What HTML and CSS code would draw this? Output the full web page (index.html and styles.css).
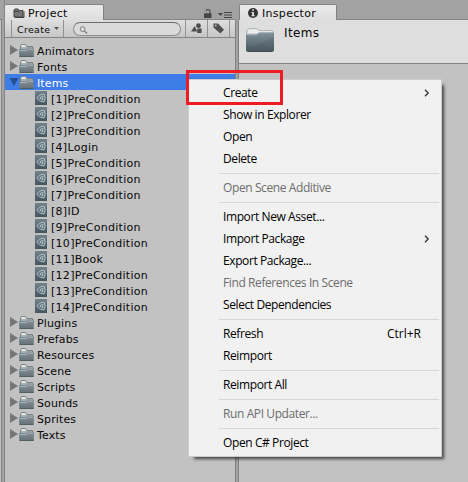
FILE: index.html
```
<!DOCTYPE html>
<html lang="en">
<head>
<meta charset="utf-8">
<title>Project</title>
<link rel="stylesheet" href="styles.css">
</head>
<body>
<svg class="defs" aria-hidden="true">
  <defs>
    <linearGradient id="fg" x1="0" y1="0" x2="0" y2="1"><stop offset="0" stop-color="#87959a"/><stop offset="1" stop-color="#647377"/></linearGradient>
    <linearGradient id="bg" x1="0" y1="0" x2="0" y2="1"><stop offset="0" stop-color="#80919a"/><stop offset="1" stop-color="#4a5a60"/></linearGradient>
    <linearGradient id="sg" x1="0" y1="0" x2="0" y2="1"><stop offset="0" stop-color="#70828b"/><stop offset="1" stop-color="#46565e"/></linearGradient>
    <symbol id="folder" viewBox="0 0 15 15">
      <path d="M1.5 12V3L2.5 1.5H6.5L8 3.5H13.5V12Z" fill="#aab2b4" stroke="#7b8486"/>
      <path d="M2.5 2H6.5V4H2.5Z" fill="#e6eaea"/>
      <path d="M.5 6.5H6.5L8.5 5H14.5V13.5H.5Z" fill="url(#fg)" stroke="#6c797c" stroke-width=".6"/>
      <path d="M1 7.5H7L9 6H14" fill="none" stroke="#b4bfc1" stroke-width=".8"/>
      <path d="M.5 13.5H14.5" stroke="#536063"/>
    </symbol>
    <symbol id="scene" viewBox="0 0 12 14">
      <rect width="12" height="14" fill="url(#sg)"/>
      <path d="M1.8 7L4.5 4.2L9 3L10.2 7L9 11L4.5 9.8Z" fill="none" stroke="#b4c3c8" stroke-width="1"/>
      <path d="M4.6 7L7.8 5V9Z" fill="#5d6f77" stroke="#c4d1d5" stroke-width=".9"/>
    </symbol>
    <symbol id="closed" viewBox="0 0 8 10"><path d="M0 0L8 5L0 10Z" fill="#777"/></symbol>
    <symbol id="chev" viewBox="0 0 6 8"><path d="M1 .8L4.2 4L1 7.2" fill="none" stroke="#333" stroke-width="1.3"/></symbol>
  </defs>
</svg>
<div class="editor">
  <div class="sliver"><div class="sliver-bar"></div></div>
  <section class="project">
    <header class="tabs">
      <div class="tab project-tab">
        <svg class="tab-folder" viewBox="0 0 12 10"><path d="M1 9V2.2L2 1H5L6.2 2.6H10V9Z" fill="#777" stroke="#3e3e3e"/><path d="M1 3.5H6M11 3.5V9.5H2" fill="none" stroke="#444"/></svg>
        <span>Project</span>
      </div>
      <div class="tab-tools">
        <svg class="lock" viewBox="0 0 8 9"><path d="M0 4.3H7.5V9H0Z" fill="#454545"/><path d="M2.3 2.2V1.4Q2.8.5 4 .5Q6 .5 6 2.3V4.5" fill="none" stroke="#454545" stroke-width="1.1"/></svg>
        <svg class="pane-menu" viewBox="0 0 14 6"><path d="M0 1H5L2.5 4Z" fill="#454545"/><path d="M6 .5H14M6 3H14M6 5.5H14" stroke="#454545"/></svg>
      </div>
    </header>
    <div class="toolbar">
      <div class="create">Create<svg viewBox="0 0 5 3"><path d="M0 0H5L2.5 3Z" fill="#555"/></svg></div>
      <div class="search"><svg viewBox="0 0 9 9"><circle cx="3.5" cy="3.5" r="2.7" fill="none" stroke="#777"/><path d="M5.5 5.5L8.5 8.5" stroke="#777" stroke-width="1.4"/></svg></div>
      <div class="tool"><svg class="types" viewBox="0 0 12 11"><path d="M0 8.5L3.7 3L6.2 8.5Z" fill="#4c4c4c"/><circle cx="7.5" cy="2.7" r="2.4" fill="#4c4c4c"/><path d="M6.2 5.5H10.6V10H6.2Z" fill="#4c4c4c"/></svg></div>
      <div class="tool"><svg class="tag" viewBox="0 0 12 11"><path fill-rule="evenodd" d="M.5.5H5L11 6.8L7.3 10.5L.5 4.5ZM2 1.7V3.2H3.5V1.7Z" fill="#505050"/></svg></div>
      <div class="tool last"></div>
    </div>
    <ul class="tree">
      <li><svg class="arrow"><use href="#closed"/></svg><svg class="folder"><use href="#folder"/></svg><span>Animators</span></li>
      <li><svg class="arrow"><use href="#closed"/></svg><svg class="folder"><use href="#folder"/></svg><span>Fonts</span></li>
      <li class="selected"><svg class="arrow" viewBox="0 0 8 10"><path d="M-.5 1H8.5L4 9Z" fill="#254f94"/></svg><svg class="folder"><use href="#folder"/></svg><span>Items</span></li>
      <li class="child"><svg class="scene"><use href="#scene"/></svg><span>[1]PreCondition</span></li>
      <li class="child"><svg class="scene"><use href="#scene"/></svg><span>[2]PreCondition</span></li>
      <li class="child"><svg class="scene"><use href="#scene"/></svg><span>[3]PreCondition</span></li>
      <li class="child"><svg class="scene"><use href="#scene"/></svg><span>[4]Login</span></li>
      <li class="child"><svg class="scene"><use href="#scene"/></svg><span>[5]PreCondition</span></li>
      <li class="child"><svg class="scene"><use href="#scene"/></svg><span>[6]PreCondition</span></li>
      <li class="child"><svg class="scene"><use href="#scene"/></svg><span>[7]PreCondition</span></li>
      <li class="child"><svg class="scene"><use href="#scene"/></svg><span>[8]ID</span></li>
      <li class="child"><svg class="scene"><use href="#scene"/></svg><span>[9]PreCondition</span></li>
      <li class="child"><svg class="scene"><use href="#scene"/></svg><span>[10]PreCondition</span></li>
      <li class="child"><svg class="scene"><use href="#scene"/></svg><span>[11]Book</span></li>
      <li class="child"><svg class="scene"><use href="#scene"/></svg><span>[12]PreCondition</span></li>
      <li class="child"><svg class="scene"><use href="#scene"/></svg><span>[13]PreCondition</span></li>
      <li class="child"><svg class="scene"><use href="#scene"/></svg><span>[14]PreCondition</span></li>
      <li><svg class="arrow"><use href="#closed"/></svg><svg class="folder"><use href="#folder"/></svg><span>Plugins</span></li>
      <li><svg class="arrow"><use href="#closed"/></svg><svg class="folder"><use href="#folder"/></svg><span>Prefabs</span></li>
      <li><svg class="arrow"><use href="#closed"/></svg><svg class="folder"><use href="#folder"/></svg><span>Resources</span></li>
      <li><svg class="arrow"><use href="#closed"/></svg><svg class="folder"><use href="#folder"/></svg><span>Scene</span></li>
      <li><svg class="arrow"><use href="#closed"/></svg><svg class="folder"><use href="#folder"/></svg><span>Scripts</span></li>
      <li><svg class="arrow"><use href="#closed"/></svg><svg class="folder"><use href="#folder"/></svg><span>Sounds</span></li>
      <li><svg class="arrow"><use href="#closed"/></svg><svg class="folder"><use href="#folder"/></svg><span>Sprites</span></li>
      <li><svg class="arrow"><use href="#closed"/></svg><svg class="folder"><use href="#folder"/></svg><span>Texts</span></li>
    </ul>
  </section>
  <div class="splitter"></div>
  <section class="inspector">
    <header class="tabs">
      <div class="tab inspector-tab">
        <svg class="info" viewBox="0 0 10 10"><circle cx="5" cy="5" r="5" fill="#333"/><path d="M4.2 1.2H5.9V2.8H4.2ZM3.5 4H5.9V7.2H6.7V8.3H3.4V7.2H4.2V5H3.5Z" fill="#e5e5e5"/></svg>
        <span>Inspector</span>
      </div>
    </header>
    <div class="asset">
      <svg class="big-folder" viewBox="0 0 30 26">
        <path d="M1.5 22V4L4 1.5H12L14 3.5H27.5L28.5 5V22Z" fill="#d2d6d6" stroke="#a8adad" stroke-width=".8"/>
        <path d="M3 4L4.5 2.3H11.7L13.5 4.2H27V6H3Z" fill="#eceeee"/>
        <path d="M1 8.5Q1 7.5 2 7.5H11.5L14 5.5H28Q29 5.5 29 6.5V23Q29 24.5 27.5 24.5H2.5Q1 24.5 1 23Z" fill="url(#bg)"/>
        <path d="M2 8H11.8L14.3 6H28" fill="none" stroke="#93a2a9" stroke-width=".8"/>
        <path d="M1 20Q15 18 29 10V23Q29 24.5 27.5 24.5H2.5Q1 24.5 1 23Z" fill="#3d4d52" opacity=".15"/>
        <path d="M2.5 24.5H27.5" stroke="#414b4f"/>
      </svg>
      <span>Items</span>
    </div>
  </section>
</div>
<div class="menu">
  <div class="item">Create<svg class="chev"><use href="#chev"/></svg></div>
  <div class="item">Show in Explorer</div>
  <div class="item">Open</div>
  <div class="item">Delete</div>
  <div class="sep"></div>
  <div class="item off">Open Scene Additive</div>
  <div class="sep"></div>
  <div class="item">Import New Asset...</div>
  <div class="item">Import Package<svg class="chev"><use href="#chev"/></svg></div>
  <div class="item">Export Package...</div>
  <div class="item off">Find References In Scene</div>
  <div class="item">Select Dependencies</div>
  <div class="sep"></div>
  <div class="item">Refresh<span class="key">Ctrl+R</span></div>
  <div class="item">Reimport</div>
  <div class="sep"></div>
  <div class="item">Reimport All</div>
  <div class="sep"></div>
  <div class="item off">Run API Updater...</div>
  <div class="sep"></div>
  <div class="item">Open C# Project</div>
</div>
<div class="highlight"></div>
</body>
</html>
```
FILE: styles.css
```
* { box-sizing: border-box; }
body { margin: 0; width: 468px; height: 482px; overflow: hidden; position: relative; background: #a2a2a2; font: 11px/16px "DejaVu Sans", sans-serif; color: #080808; }
svg { display: block; flex: none; }
.defs { position: absolute; width: 0; height: 0; }
.editor { display: flex; height: 482px; }
.sliver { width: 5px; padding-top: 19px; border-right: 1px solid #858585; }
.sliver-bar { height: 463px; width: 2px; background: #c2c2c2; border-top: 1px solid #808080; border-right: 1px solid #858585; }
.project { width: 230px; background: #c2c2c2; }
.tabs { height: 20px; padding-top: 4px; display: flex; justify-content: space-between; background: #a2a2a2; box-shadow: inset 0 -1px #858585; }
.tab { height: 16px; display: flex; align-items: center; background: linear-gradient(#eaeaea, #dedede); border-top: 1px solid #828282; border-right: 1px solid #808080; border-radius: 2px 2px 0 0; }
.project-tab { width: 99px; padding-left: 8px; gap: 3px; }
.project-tab span { padding-top: 2px; letter-spacing: .3px; }
.tab-folder { width: 12px; height: 10px; }
.tab-tools { display: flex; gap: 6px; padding: 5px 3px 0 0; }
.lock { width: 8px; height: 9px; }
.pane-menu { width: 14px; height: 6px; margin-top: 3px; }
.toolbar { height: 18px; display: flex; background: linear-gradient(#dedede, #c6c6c6); border-bottom: 1px solid #858585; font-size: 9.5px; }
.create { width: 53px; flex: none; margin-left: 6px; padding-left: 5px; border: solid #929292; border-width: 0 1px; display: flex; line-height: 19px; gap: 4px; letter-spacing: .3px; }
.create svg { width: 5px; height: 3px; margin-top: 7px; }
.search { width: 108px; height: 14px; flex: none; margin: 2px 4px 0 9px; padding: 3px 5px; border: 1px solid #8c8c8c; border-top-color: #6e6e6e; border-radius: 7px; background: #dadada; }
.search svg { width: 9px; height: 8px; }
.tool { width: 22px; flex: none; border-left: 1px solid #929292; padding: 3px 0 0 5px; }
.tool.last { flex: 1; padding: 0; }
.tool svg { width: 12px; height: 11px; }
.tree { list-style: none; margin: 0; padding: 4px 0 0; }
.tree li { height: 16px; display: flex; align-items: center; padding-left: 5px; white-space: nowrap; }
.tree span { padding-top: 3px; margin-left: 3px; letter-spacing: .12px; }
.arrow { width: 8px; height: 10px; margin-right: 1px; }
.folder { width: 15px; height: 15px; }
.tree .child { padding-left: 30px; }
.tree .child span { margin-left: 4px; letter-spacing: .28px; }
.scene { width: 12px; height: 14px; }
.tree .selected { background: #3e7de7; color: #fff; }
.splitter { width: 4px; background: #a2a2a2; border: solid #828282; border-width: 0 1px; margin-top: 20px; }
.inspector { flex: 1; background: #c2c2c2; }
.inspector-tab { width: 98px; padding-left: 8px; gap: 4px; border-left: 1px solid #828282; }
.inspector-tab span { padding-top: 2px; letter-spacing: .3px; }
.info { width: 10px; height: 10px; }
.asset { height: 44px; padding: 7px 0 0 6px; display: flex; gap: 9px; background: #dedede; border-bottom: 1px solid #858585; font-size: 12px; letter-spacing: .35px; }
.asset span { margin-top: -2px; }
.big-folder { width: 30px; height: 26px; }
.menu { position: absolute; left: 188px; top: 79px; width: 254px; height: 378px; padding: 2px; background: #f1f1f1; border: 1px solid #ccc; box-shadow: 4px 4px 3px -2px rgba(0,0,0,.65); font: 12px/22px "Open Sans", sans-serif; color: #000; }
.item { height: 22px; padding: 0 9px 0 32px; display: flex; align-items: center; justify-content: space-between; white-space: nowrap; letter-spacing: -.4px; }
.off { color: #6d6d6d; }
.sep { height: 7px; margin-left: 28px; border-top: 3px solid transparent; border-bottom: 3px solid transparent; background: #d7d7d7; background-clip: padding-box; }
.key { margin-right: 9px; letter-spacing: 0; }
.chev { width: 6px; height: 8px; }
.highlight { position: absolute; left: 186px; top: 70px; width: 97px; height: 35px; border: 3px solid #ed1c24; }
```
